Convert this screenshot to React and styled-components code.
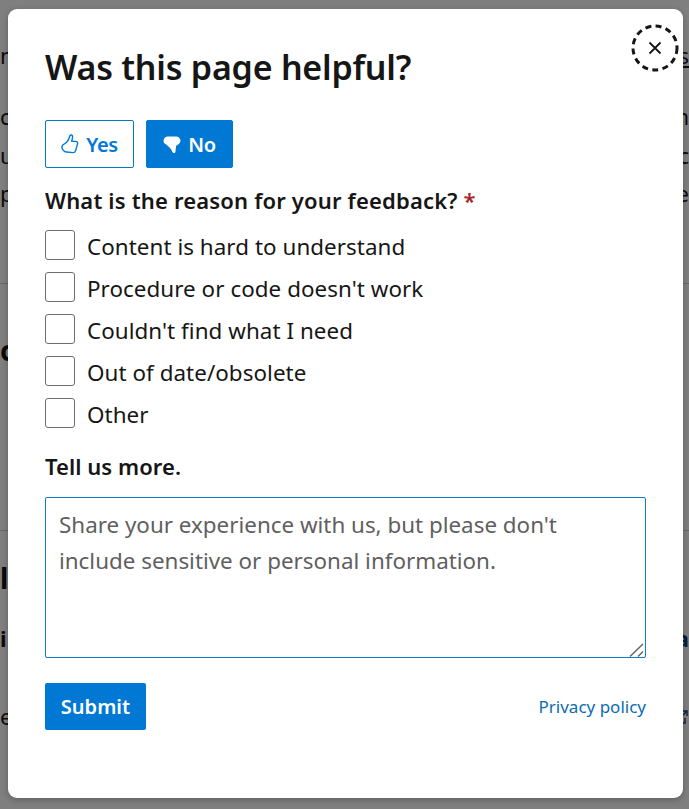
import React from 'react';
import styled, { createGlobalStyle } from 'styled-components';

const GlobalStyle = createGlobalStyle`
  html, body {
    margin: 0;
    padding: 0;
    height: 100%;
    overflow: hidden;
    font-family: "Noto Sans", "Open Sans", sans-serif;
  }
`;

const Page = styled.div`
  position: relative;
  width: 689px;
  height: 809px;
  overflow: hidden;
  background: #fff;
  color: #161616;
`;

const BackRow = styled.div`
  display: flex;
  justify-content: space-between;
  height: ${(p) => p.$h}px;
  font-size: ${(p) => (p.$big ? 28 : 22)}px;
  font-weight: ${(p) => (p.$bold ? 700 : 400)};
  line-height: 30px;
  border-bottom: ${(p) => (p.$rule ? '1px solid #d0d0d0' : 'none')};
  box-sizing: border-box;
`;

const BackLink = styled.span`
  color: #0b3f7a;
  font-weight: 700;
`;

const BackUnderlined = styled.span`
  text-decoration: underline;
`;

const Backdrop = styled.div`
  position: absolute;
  inset: 0;
  background: rgba(0, 0, 0, 0.5);
`;

const Modal = styled.form`
  position: absolute;
  left: 8px;
  top: 9px;
  width: 675px;
  height: 789px;
  box-sizing: border-box;
  padding: 32px 37px 0;
  background: #fff;
  border-radius: 9px;
  box-shadow: 0 2px 6px rgba(0, 0, 0, 0.25);
  display: flex;
  flex-direction: column;
`;

const CloseButton = styled.button`
  position: absolute;
  top: 15px;
  right: 4px;
  width: 48px;
  height: 48px;
  padding: 0;
  display: flex;
  align-items: center;
  justify-content: center;
  background: transparent;
  border: 0;
  color: #161616;
`;

const FocusRing = styled.svg`
  position: absolute;
  inset: 0;
`;

const Title = styled.h2`
  margin: 0;
  font-size: 34px;
  letter-spacing: -0.23px;
  line-height: 52px;
  font-weight: 600;
  color: #161616;
`;

const ThumbRow = styled.div`
  display: flex;
  gap: 12px;
  margin-top: 27px;
`;

const ThumbButton = styled.button`
  height: 48px;
  width: ${(p) => p.$w}px;
  box-sizing: border-box;
  display: flex;
  align-items: center;
  justify-content: center;
  gap: 7px;
  padding: 0;
  border-radius: 2px;
  border: 1px solid #0078d4;
  background: ${(p) => (p.$active ? '#0078d4' : '#fff')};
  color: ${(p) => (p.$active ? '#fff' : '#0078d4')};
  font: 600 20px "Noto Sans", sans-serif;
  letter-spacing: -0.3px;
`;

const Question = styled.p`
  margin: 16px 0 0;
  font-size: 22px;
  letter-spacing: 0.17px;
  line-height: 32px;
  font-weight: 600;
  color: #161616;
`;

const Required = styled.span`
  color: #a4262c;
`;

const Options = styled.div`
  display: flex;
  flex-direction: column;
  gap: 12px;
  margin-top: 14px;
`;

const Option = styled.label`
  display: flex;
  align-items: center;
  gap: 12px;
  height: 30px;
  font-size: 22.4px;
  letter-spacing: 0.05px;
  color: #161616;
`;

const OptionText = styled.span`
  padding-top: 2px;
`;

const Box = styled.span`
  width: 30px;
  height: 30px;
  box-sizing: border-box;
  border: 1px solid #6e6e6e;
  border-radius: 3px;
  background: #fff;
`;

const MoreLabel = styled.p`
  margin: 22px 0 0;
  font-size: 22px;
  letter-spacing: 0.05px;
  line-height: 32px;
  font-weight: 600;
  color: #161616;
`;

const CommentWrap = styled.div`
  position: relative;
  margin-top: 15px;
`;

const Comment = styled.textarea`
  display: block;
  width: 601px;
  height: 161px;
  box-sizing: border-box;
  padding: 9px 40px 7px 13px;
  border: 1px solid #1578c8;
  border-radius: 2px;
  outline: none;
  resize: none;
  font: 400 22.4px/36px "Noto Sans", sans-serif;
  color: #161616;
  &::placeholder {
    color: #5f5f5f;
    opacity: 1;
  }
`;

const Grip = styled.svg`
  position: absolute;
  right: 1px;
  bottom: 1px;
`;

const Footer = styled.div`
  display: flex;
  align-items: center;
  justify-content: space-between;
  margin-top: 25px;
`;

const Submit = styled.button`
  width: 101px;
  height: 47px;
  padding: 0;
  border: 0;
  border-radius: 2px;
  background: #0078d4;
  color: #fff;
  font: 600 20px "Noto Sans", sans-serif;
`;

const Privacy = styled.a`
  color: #0a6cb5;
  font-size: 17px;
  text-decoration: none;
`;

const ThumbUp = () => (
  <svg width="18" height="20" viewBox="0 0 18 20" fill="none" stroke="currentColor" strokeWidth="1.4" strokeLinejoin="round">
    <path d="M1 12.500c.3-1.300 1.500-2.200 2.800-2.800C6 8.500 8 5 8.800 2c.4-1.500 2.800-1.300 2.800.7 0 1.600-.6 3.300-1 4.500l4.300.2c1.300.1 2 1 1.700 2.200l-2 7c-.4 1.400-1.400 2.100-2.800 2L5.500 18c-1.300-.1-2.200-.6-3-1.500C1.500 15.500.7 14 1 12.500z" />
  </svg>
);

const ThumbDown = () => (
  <svg width="18" height="20" viewBox="0 0 18 20" fill="currentColor">
    <path d="M.5 7C.5 4.500 2.500 2.500 5 2.500h8c2.500 0 4.500 1.800 4.500 4 0 2.500-2.500 4.500-4.500 5.500l-.5 5.500c-.1 2-2.500 2-3.200.3-.8-2-2-4-3.500-5L2.500 10C1.300 9.500.5 8.500.5 7z" />
  </svg>
);

const ExternalMark = () => (
  <svg width="16" height="16" viewBox="0 0 16 16" fill="none" stroke="#1a3f6b" strokeWidth="1.4">
    <path d="M2 4v10h10V9M7 9l7-7M9 2h5v5" />
  </svg>
);

const backRows = [
  { h: 40 },
  { h: 30, l: 'n', r: <BackUnderlined>s</BackUnderlined> },
  { h: 31 },
  { h: 39, l: 'cu', r: 'n' },
  { h: 38, l: 'uc', r: 'c' },
  { h: 106, l: 'p', r: 'e', rule: true },
  { h: 51 },
  { h: 196, l: 'c', bold: true, big: true, rule: true },
  { h: 32 },
  { h: 60, l: 'lp', bold: true, big: true },
  { h: 78, l: 'i', bold: true, r: <BackLink>a</BackLink> },
  { h: 40, l: 'e', r: <ExternalMark /> },
];

const options = [
  'Content is hard to understand',
  "Procedure or code doesn't work",
  "Couldn't find what I need",
  'Out of date/obsolete',
  'Other',
];

const App = () => (
  <Page>
    <GlobalStyle />
    {backRows.map((row, idx) => (
      <BackRow key={idx} $h={row.h} $bold={row.bold} $big={row.big} $rule={row.rule}>
        <span>{row.l}</span>
        <span>{row.r}</span>
      </BackRow>
    ))}
    <Backdrop />
    <Modal>
      <CloseButton type="button" aria-label="Close">
        <FocusRing width="48" height="48" viewBox="0 0 48 48">
          <circle cx="24" cy="24" r="22" fill="none" stroke="#161616" strokeWidth="3" strokeDasharray="6 4.360" />
        </FocusRing>
        <svg width="14" height="14" viewBox="0 0 14 14" stroke="currentColor" strokeWidth="1.800">
          <path d="M1.500 1.500l11 11M12.500 1.500l-11 11" />
        </svg>
      </CloseButton>
      <Title>Was this page helpful?</Title>
      <ThumbRow>
        <ThumbButton type="button" $w={89}><ThumbUp />Yes</ThumbButton>
        <ThumbButton type="button" $w={87} $active><ThumbDown />No</ThumbButton>
      </ThumbRow>
      <Question>What is the reason for your feedback? <Required>*</Required></Question>
      <Options>
        {options.map((text) => (
          <Option key={text}>
            <Box />
            <OptionText>{text}</OptionText>
          </Option>
        ))}
      </Options>
      <MoreLabel>Tell us more.</MoreLabel>
      <CommentWrap>
        <Comment placeholder="Share your experience with us, but please don't include sensitive or personal information." />
        <Grip width="16" height="14" viewBox="0 0 16 14" stroke="#666" strokeWidth="1.500">
          <path d="M1 13.500L14 1M9 13.500l5-5" />
        </Grip>
      </CommentWrap>
      <Footer>
        <Submit type="button">Submit</Submit>
        <Privacy href="#">Privacy policy</Privacy>
      </Footer>
    </Modal>
  </Page>
);

export default App;
